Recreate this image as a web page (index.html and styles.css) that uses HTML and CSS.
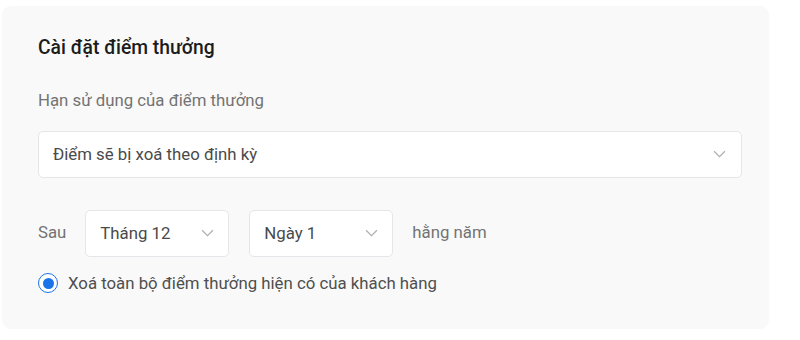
FILE: index.html
```html
<!DOCTYPE html>
<html lang="vi">
<head>
    <meta charset="UTF-8">
    <meta name="viewport" content="width=device-width, initial-scale=1.0">
    <title>Cài đặt điểm thưởng</title>
    <link rel="stylesheet" href="styles.css">
</head>
<body>

    <div class="card">
        <h2 class="card-title">Cài đặt điểm thưởng</h2>

        <p class="field-label">Hạn sử dụng của điểm thưởng</p>
        <div class="select select-wide">
            <span>Điểm sẽ bị xoá theo định kỳ</span>
            <svg class="chevron" viewBox="0 0 12 7"><path d="M1 1l5 5 5-5"/></svg>
        </div>

        <div class="period-row">
            <span class="row-text">Sau</span>
            <div class="select select-small">
                <span>Tháng 12</span>
                <svg class="chevron" viewBox="0 0 12 7"><path d="M1 1l5 5 5-5"/></svg>
            </div>
            <div class="select select-small">
                <span>Ngày 1</span>
                <svg class="chevron" viewBox="0 0 12 7"><path d="M1 1l5 5 5-5"/></svg>
            </div>
            <span class="row-text">hằng năm</span>
        </div>

        <label class="radio-line">
            <span class="radio"><span class="radio-dot"></span></span>
            Xoá toàn bộ điểm thưởng hiện có của khách hàng
        </label>
    </div>

</body>
</html>
```

FILE: styles.css
```css
body {
    margin: 0;
    padding: 6px 0 0 2px;
    background: #ffffff;
    font-family: Roboto, "Noto Sans", sans-serif;
}

.card {
    width: 767px;
    height: 323px;
    box-sizing: border-box;
    padding: 29px 27px 0 36px;
    background: #f9f9f9;
    border-radius: 9px;
}

.card-title {
    margin: 0;
    font-size: 19.3px;
    font-weight: 500;
    line-height: 26px;
    color: #1c1c1c;
}

.field-label {
    margin: 29px 0 0;
    font-size: 16.8px;
    line-height: 20px;
    color: #737373;
}

.select {
    display: flex;
    align-items: center;
    justify-content: space-between;
    box-sizing: border-box;
    height: 47px;
    padding-bottom: 2px;
    background: #ffffff;
    border: 1px solid #e4e6ea;
    border-radius: 5px;
    font-size: 16.8px;
    color: #4a4a4a;
}

.select-wide {
    margin-top: 21px;
    padding-left: 14px;
    padding-right: 15px;
}

.select-small {
    width: 144px;
    padding-left: 14px;
    padding-right: 14px;
}

.chevron {
    width: 13px;
    height: 8px;
    fill: none;
    stroke: #aeaeae;
    stroke-width: 1.1;
}

.period-row {
    display: flex;
    align-items: center;
    margin-top: 32px;
}

.row-text {
    font-size: 16.8px;
    color: #737373;
    margin-right: 19px;
    padding-bottom: 3px;
}

.select-small + .select-small {
    margin-left: 20px;
    margin-right: 19px;
}

.radio-line {
    display: flex;
    align-items: center;
    margin-top: 16px;
    font-size: 16.8px;
    line-height: 20px;
    color: #4f4f4f;
}

.radio {
    display: flex;
    align-items: center;
    justify-content: center;
    width: 20px;
    height: 20px;
    box-sizing: border-box;
    margin-right: 10px;
    border: 1.5px solid #1a73e8;
    border-radius: 50%;
    background: #fff;
}

.radio-dot {
    width: 11px;
    height: 11px;
    border-radius: 50%;
    background: #1a73e8;
}
```
